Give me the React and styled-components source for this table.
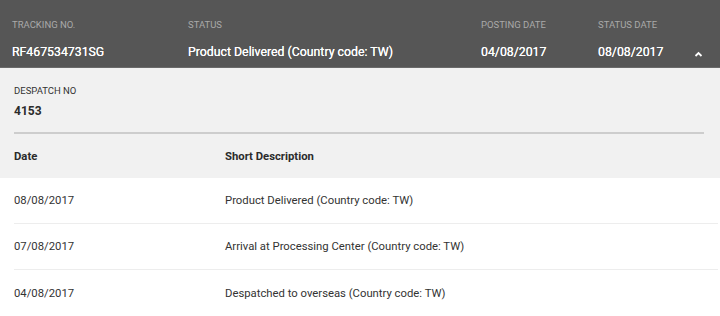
import React from 'react';
import styled, { createGlobalStyle } from 'styled-components';

const GlobalStyle = createGlobalStyle`
  body {
    margin: 0;
    background: #ffffff;
    font-family: Roboto, "Liberation Sans", Arial, sans-serif;
    -webkit-font-smoothing: antialiased;
  }
`;

const Card = styled.div`
  width: 720px;
  background: #ffffff;
`;

const Summary = styled.div`
  display: grid;
  grid-template-columns: 176px 293px 117px 1fr 24px;
  height: 68px;
  box-sizing: border-box;
  padding: 18px 10px 0 12px;
  background: #565656;
  border-bottom: 1px solid #6a6a6a;
`;

const Field = styled.div`
  display: flex;
  flex-direction: column;
  gap: 13px;
`;

const HeadLabel = styled.span`
  font-size: 9.5px;
  line-height: 13px;
  text-transform: uppercase;
  color: #a9a9a9;
`;

const HeadValue = styled.span`
  font-size: 12.3px;
  line-height: 16px;
  font-weight: 400;
  color: #ffffff;
  white-space: nowrap;
  text-shadow: 0 0 0.3px #ffffff;
`;

const Toggle = styled.div`
  display: flex;
  align-items: center;
  justify-content: center;
  padding-top: 22px;
`;

const Details = styled.div`
  background: #f1f1f1;
  padding: 17px 16px 0 14px;
`;

const SmallLabel = styled.div`
  font-size: 9.5px;
  line-height: 12px;
  color: #333333;
  text-transform: uppercase;
`;

const BigValue = styled.div`
  margin-top: 6px;
  font-size: 12px;
  line-height: 16px;
  font-weight: 700;
  color: #2b2b2b;
`;

const Divider = styled.hr`
  margin: 13px 0 0;
  border: none;
  height: 2px;
  background: #cdcdcd;
`;

const TableRow = styled.div`
  display: grid;
  grid-template-columns: 211px 1fr;
  align-items: center;
  height: ${p => (p.head ? '44px' : '46px')};
  box-sizing: border-box;
  font-size: 11.3px;
  font-weight: ${p => (p.head ? 700 : 400)};
  color: ${p => (p.head ? '#2b2b2b' : '#333333')};
`;

const Events = styled.div`
  padding-left: 14px;
  padding-right: 2px;
`;

const EventRow = styled(TableRow)`
  border-bottom: 1px solid #ededed;
  &:last-child {
    border-bottom: none;
  }
`;

const columns = [
  { label: 'Tracking No.', value: 'RF467534731SG' },
  { label: 'Status', value: 'Product Delivered (Country code: TW)' },
  { label: 'Posting Date', value: '04/08/2017' },
  { label: 'Status Date', value: '08/08/2017' },
];

const events = [
  { date: '08/08/2017', text: 'Product Delivered (Country code: TW)' },
  { date: '07/08/2017', text: 'Arrival at Processing Center (Country code: TW)' },
  { date: '04/08/2017', text: 'Despatched to overseas (Country code: TW)' },
];

const ChevronUp = () => (
  <svg width="9" height="6" viewBox="0 0 9 6">
    <polyline points="1.5,5 4.5,2 7.5,5" fill="none" stroke="#ffffff" strokeWidth="1.8" />
  </svg>
);

const App = () => (
  <>
    <GlobalStyle />
    <Card>
      <Summary>
        {columns.map(c => (
          <Field key={c.label}>
            <HeadLabel>{c.label}</HeadLabel>
            <HeadValue>{c.value}</HeadValue>
          </Field>
        ))}
        <Toggle>
          <ChevronUp />
        </Toggle>
      </Summary>
      <Details>
        <SmallLabel>Despatch No</SmallLabel>
        <BigValue>4153</BigValue>
        <Divider />
        <TableRow head>
          <span>Date</span>
          <span>Short Description</span>
        </TableRow>
      </Details>
      <Events>
        {events.map(e => (
          <EventRow key={e.date}>
            <span>{e.date}</span>
            <span>{e.text}</span>
          </EventRow>
        ))}
      </Events>
    </Card>
  </>
);

export default App;
